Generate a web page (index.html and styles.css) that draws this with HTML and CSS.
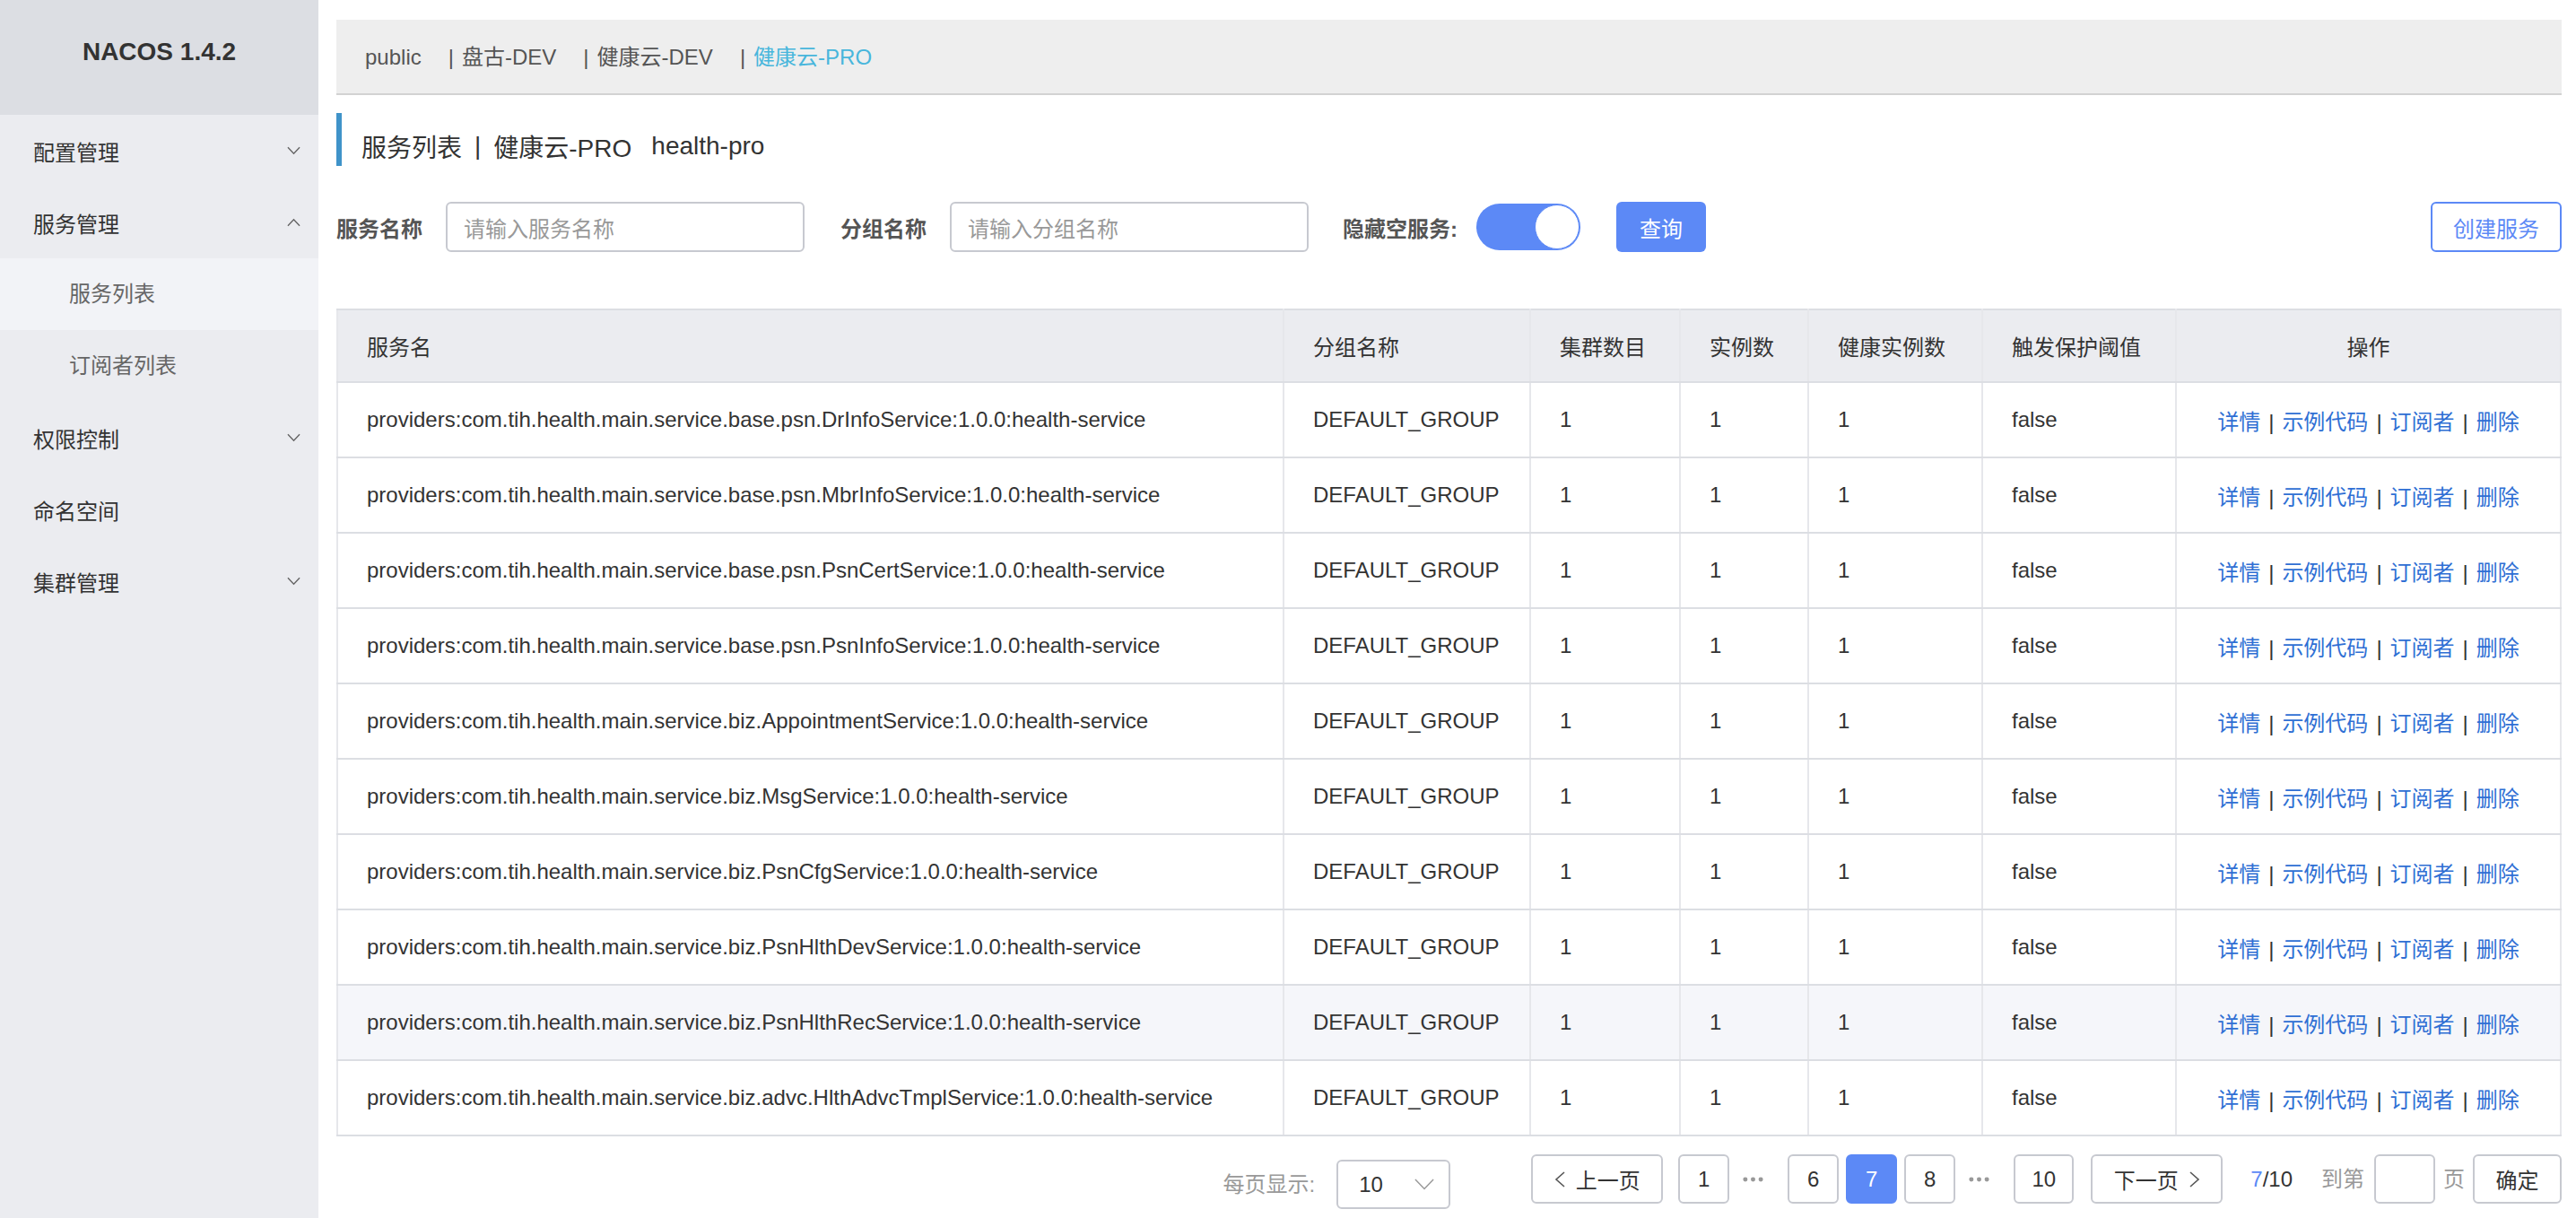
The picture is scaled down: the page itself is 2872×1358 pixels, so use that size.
FILE: index.html
```html
<!DOCTYPE html>
<html lang="zh-CN">
<head>
<meta charset="utf-8">
<title>Nacos - 服务列表</title>
<link rel="stylesheet" href="styles.css">
</head>
<body>
<div class="app">
  <aside class="sidebar">
    <div class="brand">NACOS 1.4.2</div>
    <ul class="menu">
      <li class="menu-item"><span>配置管理</span><svg class="chev" viewBox="0 0 16 10"><polyline points="1,1 8,8.5 15,1"/></svg></li>
      <li class="menu-item"><span>服务管理</span><svg class="chev" viewBox="0 0 16 10"><polyline points="1,9 8,1.5 15,9"/></svg></li>
      <li class="menu-sub active">服务列表</li>
      <li class="menu-sub">订阅者列表</li>
      <li class="menu-item"><span>权限控制</span><svg class="chev" viewBox="0 0 16 10"><polyline points="1,1 8,8.5 15,1"/></svg></li>
      <li class="menu-item"><span>命名空间</span></li>
      <li class="menu-item"><span>集群管理</span><svg class="chev" viewBox="0 0 16 10"><polyline points="1,1 8,8.5 15,1"/></svg></li>
    </ul>
  </aside>
  <main class="main">
    <div class="ns-bar"><span class="ns">public</span><span class="ns"><span class="bar">|</span>盘古-DEV</span><span class="ns"><span class="bar">|</span>健康云-DEV</span><span class="ns ns-active"><span class="bar">|</span>健康云-PRO</span></div>
    <div class="page-title">
      <span>服务列表</span><span class="title-sep">|</span><span>健康云-PRO</span><span class="title-id">health-pro</span>
    </div>
    <div class="filter">
      <label class="f-label">服务名称</label>
      <div class="f-input">请输入服务名称</div>
      <label class="f-label f-gap">分组名称</label>
      <div class="f-input">请输入分组名称</div>
      <label class="f-label f-gap f-hide">隐藏空服务:</label>
      <div class="switch"><div class="knob"></div></div>
      <button class="btn-primary">查询</button>
      <button class="btn-outline">创建服务</button>
    </div>
    <table class="grid">
      <colgroup>
        <col class="c1"><col class="c2"><col class="c3"><col class="c4"><col class="c5"><col class="c6"><col class="c7">
      </colgroup>
      <thead>
        <tr><th>服务名</th><th>分组名称</th><th>集群数目</th><th>实例数</th><th>健康实例数</th><th>触发保护阈值</th><th class="center">操作</th></tr>
      </thead>
      <tbody>
        <tr><td>providers:com.tih.health.main.service.base.psn.DrInfoService:1.0.0:health-service</td><td>DEFAULT_GROUP</td><td>1</td><td>1</td><td>1</td><td>false</td><td class="center ops"><a>详情</a><span class="sep">|</span><a>示例代码</a><span class="sep">|</span><a>订阅者</a><span class="sep">|</span><a>删除</a></td></tr>
        <tr><td>providers:com.tih.health.main.service.base.psn.MbrInfoService:1.0.0:health-service</td><td>DEFAULT_GROUP</td><td>1</td><td>1</td><td>1</td><td>false</td><td class="center ops"><a>详情</a><span class="sep">|</span><a>示例代码</a><span class="sep">|</span><a>订阅者</a><span class="sep">|</span><a>删除</a></td></tr>
        <tr><td>providers:com.tih.health.main.service.base.psn.PsnCertService:1.0.0:health-service</td><td>DEFAULT_GROUP</td><td>1</td><td>1</td><td>1</td><td>false</td><td class="center ops"><a>详情</a><span class="sep">|</span><a>示例代码</a><span class="sep">|</span><a>订阅者</a><span class="sep">|</span><a>删除</a></td></tr>
        <tr><td>providers:com.tih.health.main.service.base.psn.PsnInfoService:1.0.0:health-service</td><td>DEFAULT_GROUP</td><td>1</td><td>1</td><td>1</td><td>false</td><td class="center ops"><a>详情</a><span class="sep">|</span><a>示例代码</a><span class="sep">|</span><a>订阅者</a><span class="sep">|</span><a>删除</a></td></tr>
        <tr><td>providers:com.tih.health.main.service.biz.AppointmentService:1.0.0:health-service</td><td>DEFAULT_GROUP</td><td>1</td><td>1</td><td>1</td><td>false</td><td class="center ops"><a>详情</a><span class="sep">|</span><a>示例代码</a><span class="sep">|</span><a>订阅者</a><span class="sep">|</span><a>删除</a></td></tr>
        <tr><td>providers:com.tih.health.main.service.biz.MsgService:1.0.0:health-service</td><td>DEFAULT_GROUP</td><td>1</td><td>1</td><td>1</td><td>false</td><td class="center ops"><a>详情</a><span class="sep">|</span><a>示例代码</a><span class="sep">|</span><a>订阅者</a><span class="sep">|</span><a>删除</a></td></tr>
        <tr><td>providers:com.tih.health.main.service.biz.PsnCfgService:1.0.0:health-service</td><td>DEFAULT_GROUP</td><td>1</td><td>1</td><td>1</td><td>false</td><td class="center ops"><a>详情</a><span class="sep">|</span><a>示例代码</a><span class="sep">|</span><a>订阅者</a><span class="sep">|</span><a>删除</a></td></tr>
        <tr><td>providers:com.tih.health.main.service.biz.PsnHlthDevService:1.0.0:health-service</td><td>DEFAULT_GROUP</td><td>1</td><td>1</td><td>1</td><td>false</td><td class="center ops"><a>详情</a><span class="sep">|</span><a>示例代码</a><span class="sep">|</span><a>订阅者</a><span class="sep">|</span><a>删除</a></td></tr>
        <tr class="hover"><td>providers:com.tih.health.main.service.biz.PsnHlthRecService:1.0.0:health-service</td><td>DEFAULT_GROUP</td><td>1</td><td>1</td><td>1</td><td>false</td><td class="center ops"><a>详情</a><span class="sep">|</span><a>示例代码</a><span class="sep">|</span><a>订阅者</a><span class="sep">|</span><a>删除</a></td></tr>
        <tr><td>providers:com.tih.health.main.service.biz.advc.HlthAdvcTmplService:1.0.0:health-service</td><td>DEFAULT_GROUP</td><td>1</td><td>1</td><td>1</td><td>false</td><td class="center ops"><a>详情</a><span class="sep">|</span><a>示例代码</a><span class="sep">|</span><a>订阅者</a><span class="sep">|</span><a>删除</a></td></tr>
      </tbody>
    </table>
    <div class="pagination">
      <span class="muted size-label">每页显示:</span>
      <div class="size-select"><span>10</span><svg class="sel-chev" viewBox="0 0 24 14"><polyline points="1,1 12,12.5 23,1"/></svg></div>
      <div class="pager">
        <button class="pg prev"><svg class="arrow" viewBox="0 0 12 18"><polyline points="11,1 2,9 11,17"/></svg>上一页</button>
        <button class="pg num">1</button>
        <span class="dots"><svg viewBox="0 0 24 6"><circle cx="3" cy="3" r="2.6"/><circle cx="12" cy="3" r="2.6"/><circle cx="21" cy="3" r="2.6"/></svg></span>
        <button class="pg num">6</button>
        <button class="pg num current">7</button>
        <button class="pg num">8</button>
        <span class="dots"><svg viewBox="0 0 24 6"><circle cx="3" cy="3" r="2.6"/><circle cx="12" cy="3" r="2.6"/><circle cx="21" cy="3" r="2.6"/></svg></span>
        <button class="pg num wide">10</button>
        <button class="pg next">下一页<svg class="arrow" viewBox="0 0 12 18"><polyline points="1,1 10,9 1,17"/></svg></button>
      </div>
      <span class="page-info"><span class="cur">7</span>/10</span>
      <span class="muted jump-label">到第</span>
      <div class="jump-input"></div>
      <span class="muted page-unit">页</span>
      <button class="pg ok">确定</button>
    </div>
  </main>
</div>
</body>
</html>
```
FILE: styles.css
```css
* { box-sizing: border-box; }
html, body { margin: 0; padding: 0; }
body {
  width: 2872px;
  height: 1358px;
  overflow: hidden;
  background: #fff;
  font-family: "Liberation Sans", "Noto Sans CJK SC", sans-serif;
  font-size: 24px;
  color: #333;
}
.app { display: flex; height: 1358px; }

/* Sidebar */
.sidebar { width: 355px; flex: none; background: #ebecf0; }
.brand {
  height: 128px;
  background: #dcdee3;
  text-align: center;
  font-weight: bold;
  font-size: 28px;
  line-height: 36px;
  padding-top: 40px;
  color: #333;
}
.menu { list-style: none; margin: 0; padding: 0; }
.menu-item {
  height: 80px;
  display: flex;
  align-items: center;
  justify-content: space-between;
  padding: 0 20px 0 37px;
  color: #333;
}
.menu-sub {
  height: 80px;
  line-height: 80px;
  padding-left: 77px;
  color: #666;
}
.menu-sub.active { background: #f2f3f7; }
.chev { width: 15px; height: 10px; fill: none; stroke: #666; stroke-width: 1.5; }

/* Main */
.main { flex: 1; padding: 22px 18px 0 20px; }
.ns-bar {
  height: 84px;
  background: #eeeeee;
  border-bottom: 2px solid #d2d2d2;
  line-height: 84px;
  padding-left: 32px;
  white-space: nowrap;
  color: #555;
}
.ns { margin-right: 30px; }
.ns .bar { margin-right: 9px; }
.ns-active { color: #48b6dc; }
.ns-active .bar { color: #555; }

.page-title {
  margin-top: 20px;
  height: 59px;
  border-left: 6px solid #3f93c9;
  padding-left: 22px;
  padding-top: 14px;
  display: flex;
  align-items: center;
  font-size: 28px;
  color: #333;
}
.title-sep { margin: 0 14px; }
.title-id { margin-left: 22px; }

.filter {
  margin-top: 40px;
  height: 56px;
  display: flex;
  align-items: center;
}
.f-label { font-weight: bold; color: #555; margin-right: 26px; }
.f-label.f-gap { margin-left: 40px; }
.f-label.f-hide { margin-left: 38px; margin-right: 21px; }
.f-input {
  width: 400px;
  height: 56px;
  border: 2px solid #c7c9d0;
  border-radius: 6px;
  padding-left: 18px;
  display: flex;
  align-items: center;
  color: #999;
}
.switch {
  width: 116px;
  height: 52px;
  border-radius: 26px;
  background: #5c89f6;
  display: flex;
  align-items: center;
  justify-content: flex-end;
  padding-right: 1px;
}
.knob {
  width: 50px;
  height: 50px;
  border-radius: 50%;
  background: #fff;
  border: 1.5px solid #5c89f6;
}
.btn-primary {
  margin-left: 40px;
  width: 100px;
  height: 56px;
  border: none;
  border-radius: 6px;
  background: #5c89f6;
  color: #fff;
  font: inherit;
  padding: 0;
}
.btn-outline {
  margin-left: auto;
  width: 146px;
  height: 56px;
  border: 2px solid #5c89f6;
  border-radius: 6px;
  background: #fff;
  color: #5c89f6;
  font: inherit;
  padding: 0;
}

/* Table */
.grid {
  margin-top: 63px;
  width: 2479px;
  table-layout: fixed;
  border-collapse: collapse;
  border: 2px solid #dcdee3;
}
.c1 { width: 1055px; } .c2 { width: 275px; } .c3 { width: 167px; }
.c4 { width: 143px; } .c5 { width: 194px; } .c6 { width: 216px; } .c7 { width: 429px; }
.grid th, .grid td {
  height: 84px;
  padding: 0 0 0 32px;
  text-align: left;
  font-weight: normal;
  white-space: nowrap;
  border-top: 2px solid #dcdee3;
  border-bottom: 2px solid #dcdee3;
  border-left: 2px solid #e6e7eb;
  border-right: 2px solid #e6e7eb;
  color: #333;
}
.grid th { background: #ebecf0; height: 81px; }
.grid .center { text-align: center; padding: 0; }
.grid tr.hover td { background: #f5f6fa; }
.ops a { color: #2f6fd4; }
.ops .sep { margin: 0 9px; color: #333; }

/* Pagination */
.pagination {
  margin-top: 20px;
  display: flex;
  align-items: flex-start;
  justify-content: flex-end;
}
.muted { color: #999; }
.size-label { margin-top: 6px; height: 55px; line-height: 55px; }
.size-select {
  margin-left: 24px;
  margin-top: 6px;
  width: 127px;
  height: 55px;
  border: 2px solid #c7c9d0;
  border-radius: 6px;
  display: flex;
  align-items: center;
  justify-content: space-between;
  padding: 0 16px 0 23px;
}
.sel-chev { width: 22px; height: 13px; fill: none; stroke: #999; stroke-width: 1.6; }
.pager { margin-left: 90px; display: flex; align-items: center; }
.pg {
  height: 55px;
  border: 2px solid #c7c9d0;
  border-radius: 6px;
  background: #fff;
  color: #333;
  font: inherit;
  padding: 0;
  display: flex;
  align-items: center;
  justify-content: center;
}
.num { width: 57px; margin-left: 8px; }
.num.wide { width: 67px; }
.num.current { background: #5c89f6; border-color: #5c89f6; color: #fff; }
.prev { width: 147px; margin-right: 9px; }
.prev .arrow { margin-right: 12px; }
.next { width: 147px; margin-left: 19px; }
.next .arrow { margin-left: 12px; }
.arrow { width: 12px; height: 18px; fill: none; stroke: #555; stroke-width: 1.6; }
.dots { width: 23px; height: 55px; display: flex; align-items: center; margin-left: 15px; margin-right: 19px; }
.dots svg { width: 23px; height: 6px; fill: #999; }
.page-info { margin-left: 31px; height: 55px; line-height: 55px; color: #333; }
.page-info .cur { color: #5c89f6; }
.jump-label { margin-left: 32px; height: 55px; line-height: 55px; }
.jump-input {
  margin-left: 11px;
  width: 68px;
  height: 55px;
  border: 2px solid #c7c9d0;
  border-radius: 6px;
}
.page-unit { margin-left: 9px; height: 55px; line-height: 55px; }
.ok { margin-left: 9px; width: 99px; }
```
